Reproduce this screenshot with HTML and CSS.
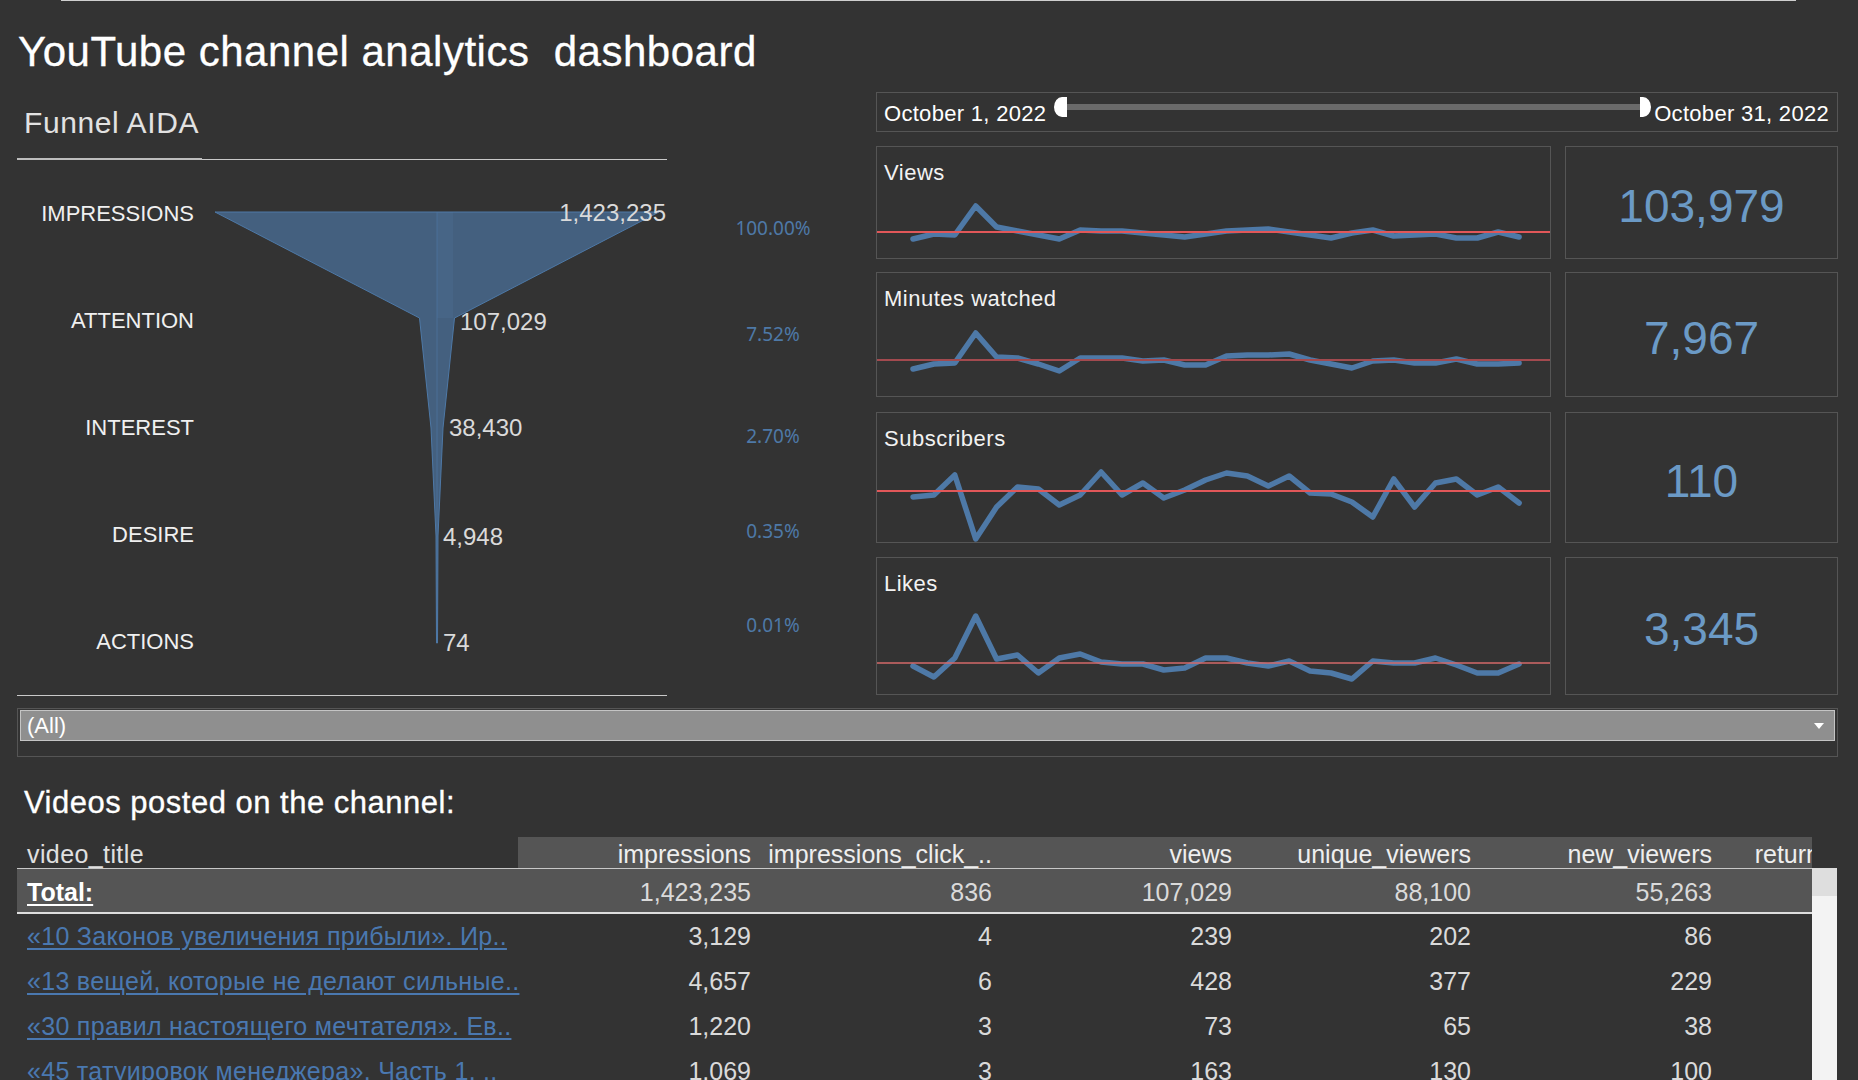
FILE: index.html
```html
<!DOCTYPE html>
<html lang="en">
<head>
<meta charset="utf-8">
<title>YouTube channel analytics dashboard</title>
<link rel="stylesheet" href="styles.css">
</head>
<body>
<div class="topline"></div>
<h1 class="title">YouTube channel analytics  dashboard</h1>

<div class="main">
  <section class="funnel-panel">
    <h2 class="funnel-title">Funnel AIDA</h2>
    <div class="rule"><span class="rule-a"></span><span class="rule-b"></span></div>
    <div class="funnel-body">
      <svg class="funnel-chart" width="465" height="535" viewBox="202 160 465 535">
        <polygon points="215,212 659,212 454.5,318 443,428 438,536 437.5,643 436.5,643 436,536 431,428 419.5,318" fill="#44607f" stroke="#4e79a7" stroke-width="1"/>
        <rect x="437" y="212" width="16" height="106" fill="#5b86b4" opacity="0.14"/>
        <line x1="437" y1="212" x2="437" y2="643" stroke="#4e79a7" stroke-width="1" opacity="0.6"/>
        <text class="fv" x="666" y="221" text-anchor="end">1,423,235</text>
        <text class="fv" x="460" y="330">107,029</text>
        <text class="fv" x="449" y="436">38,430</text>
        <text class="fv" x="443" y="545">4,948</text>
        <text class="fv" x="443" y="651">74</text>
      </svg>
      <div class="stage">IMPRESSIONS</div>
      <div class="stage">ATTENTION</div>
      <div class="stage">INTEREST</div>
      <div class="stage">DESIRE</div>
      <div class="stage">ACTIONS</div>
    </div>
  </section>

  <div class="pct-col">
    <div class="pct">100.00%</div>
    <div class="pct">7.52%</div>
    <div class="pct">2.70%</div>
    <div class="pct">0.35%</div>
    <div class="pct">0.01%</div>
  </div>

  <div class="right-col">
    <div class="date-box">
      <span class="date">October 1, 2022</span>
      <div class="slider">
        <div class="track"></div>
        <span class="handle handle-l"></span>
        <span class="handle handle-r"></span>
      </div>
      <span class="date">October 31, 2022</span>
    </div>

    <div class="metric-row r1">
      <div class="spark-card">
        <div class="spark-label">Views</div>
        <svg class="spark" width="673" height="72" viewBox="1 40 673 72">
          <polyline class="series" points="37,93 57.9,88 78.8,89 99.7,60 120.6,81 141.5,85 162.4,89 183.3,93 204.2,84 225.1,85 246,85 266.9,87 287.8,89 308.7,91 329.6,88 350.5,85 371.4,84 392.3,83 413.2,86 434.1,89 455,92 475.9,87 496.8,84 517.7,90 538.6,89 559.5,88 580.4,92 601.3,92 622.2,86 643.1,91"/>
          <line class="ref" x1="1" y1="86" x2="674" y2="86"/>
        </svg>
      </div>
      <div class="kpi">103,979</div>
    </div>

    <div class="metric-row r2">
      <div class="spark-card">
        <div class="spark-label">Minutes watched</div>
        <svg class="spark" width="673" height="84" viewBox="1 40 673 84">
          <polyline class="series" points="37,97 57.9,92 78.8,91 99.7,61 120.6,85 141.5,86 162.4,92 183.3,99 204.2,86 225.1,86 246,86 266.9,89 287.8,88 308.7,93 329.6,93 350.5,84 371.4,83 392.3,83 413.2,82 434.1,88 455,92 475.9,96 496.8,89 517.7,88 538.6,91 559.5,91 580.4,87 601.3,92 622.2,92 643.1,91"/>
          <line class="ref ref-dim" x1="1" y1="88" x2="674" y2="88"/>
        </svg>
      </div>
      <div class="kpi">7,967</div>
    </div>

    <div class="metric-row r3">
      <div class="spark-card">
        <div class="spark-label">Subscribers</div>
        <svg class="spark" width="673" height="90" viewBox="1 40 673 90">
          <polyline class="series" points="37,85 57.9,83 78.8,63 99.7,127 120.6,95 141.5,75 162.4,77 183.3,93 204.2,83 225.1,60 246,83 266.9,71 287.8,86 308.7,78 329.6,68 350.5,61 371.4,64 392.3,74 413.2,64 434.1,81 455,82 475.9,90 496.8,105 517.7,67 538.6,95 559.5,71 580.4,67 601.3,83 622.2,75 643.1,91"/>
          <line class="ref" x1="1" y1="79" x2="674" y2="79"/>
        </svg>
      </div>
      <div class="kpi">110</div>
    </div>

    <div class="metric-row r4">
      <div class="spark-card">
        <div class="spark-label">Likes</div>
        <svg class="spark" width="673" height="97" viewBox="1 40 673 97">
          <polyline class="series" points="37,109 57.9,120 78.8,101 99.7,59 120.6,102 141.5,98 162.4,116 183.3,101 204.2,97 225.1,105 246,107 266.9,107 287.8,113 308.7,111 329.6,101 350.5,101 371.4,106 392.3,109 413.2,104 434.1,114 455,116 475.9,122 496.8,104 517.7,106 538.6,106 559.5,101 580.4,108 601.3,116 622.2,116 643.1,107"/>
          <line class="ref ref-thin" x1="1" y1="106" x2="674" y2="106"/>
        </svg>
      </div>
      <div class="kpi">3,345</div>
    </div>
  </div>
</div>

<div class="filter">
  <div class="filter-bar"><span>(All)</span><span class="caret"></span></div>
</div>

<section class="videos">
  <h2 class="videos-title">Videos posted on the channel:</h2>
  <div class="table-wrap">
    <div class="table">
      <div class="row head">
        <div class="cell first">video_title</div>
        <div class="cell">impressions</div>
        <div class="cell">impressions_click_..</div>
        <div class="cell">views</div>
        <div class="cell">unique_viewers</div>
        <div class="cell">new_viewers</div>
        <div class="cell">returning_viewers</div>
      </div>
      <div class="row total">
        <div class="cell first"><span class="total-label">Total:</span></div>
        <div class="cell">1,423,235</div>
        <div class="cell">836</div>
        <div class="cell">107,029</div>
        <div class="cell">88,100</div>
        <div class="cell">55,263</div>
        <div class="cell"></div>
      </div>
      <div class="body">
        <div class="row data">
          <div class="cell first"><a class="link" href="#">«10 Законов увеличения прибыли». Ир..</a></div>
          <div class="cell">3,129</div>
          <div class="cell">4</div>
          <div class="cell">239</div>
          <div class="cell">202</div>
          <div class="cell">86</div>
          <div class="cell"></div>
        </div>
        <div class="row data">
          <div class="cell first"><a class="link" href="#">«13 вещей, которые не делают сильные..</a></div>
          <div class="cell">4,657</div>
          <div class="cell">6</div>
          <div class="cell">428</div>
          <div class="cell">377</div>
          <div class="cell">229</div>
          <div class="cell"></div>
        </div>
        <div class="row data">
          <div class="cell first"><a class="link" href="#">«30 правил настоящего мечтателя». Ев..</a></div>
          <div class="cell">1,220</div>
          <div class="cell">3</div>
          <div class="cell">73</div>
          <div class="cell">65</div>
          <div class="cell">38</div>
          <div class="cell"></div>
        </div>
        <div class="row data">
          <div class="cell first"><a class="link" href="#">«45 татуировок менеджера». Часть 1. ..</a></div>
          <div class="cell">1,069</div>
          <div class="cell">3</div>
          <div class="cell">163</div>
          <div class="cell">130</div>
          <div class="cell">100</div>
          <div class="cell"></div>
        </div>
      </div>
    </div>
    <div class="scrollbar"><div class="thumb"></div></div>
  </div>
</section>
</body>
</html>
```

FILE: styles.css
```css
* { box-sizing: border-box; }

html, body {
  margin: 0;
  padding: 0;
}

body {
  width: 1858px;
  height: 1080px;
  overflow: hidden;
  background: #333333;
  color: #eeeeee;
  font-family: "Liberation Sans", Arial, sans-serif;
}

.topline {
  height: 1px;
  width: 1735px;
  margin-left: 61px;
  background: #cfcfcf;
}

.title {
  margin: 0;
  height: 79px;
  padding: 26px 0 0 18px;
  font-size: 42px;
  line-height: 50px;
  font-weight: normal;
  letter-spacing: 0.5px;
  color: #ffffff;
  white-space: pre;
  -webkit-text-stroke: 0.3px #ffffff;
}

/* ---------- main area ---------- */
.main {
  display: flex;
  align-items: flex-start;
}

.funnel-panel {
  width: 650px;
  margin-left: 17px;
}

.funnel-title {
  margin: 25px 0 0;
  padding-left: 7px;
  font-size: 30px;
  line-height: 36px;
  font-weight: normal;
  letter-spacing: 0.6px;
  color: #e2e2e2;
}

.rule {
  display: flex;
  align-items: flex-end;
  height: 2px;
  margin-top: 17px;
}

.rule-a {
  width: 185px;
  height: 2px;
  background: #bdbdbd;
}

.rule-b {
  flex: 1;
  height: 1px;
  background: #c9c9c9;
}

.funnel-body {
  display: grid;
  grid-template-columns: 185px 465px;
  grid-template-rows: repeat(5, 107px);
  border-bottom: 1px solid #c9c9c9;
}

.funnel-chart {
  grid-column: 2;
  grid-row: 1 / 6;
  display: block;
}

.stage {
  grid-column: 1;
  display: flex;
  align-items: center;
  justify-content: flex-end;
  padding-right: 8px;
  font-size: 22px;
  color: #f0f0f0;
}

.fv {
  font-family: "Liberation Sans", Arial, sans-serif;
  font-size: 24px;
  fill: #dadada;
}

.pct-col {
  width: 209px;
  padding-left: 3px;
  display: flex;
  flex-direction: column;
  align-items: center;
}

.pct {
  font-family: "Noto Sans", "Open Sans", sans-serif;
  font-size: 19px;
  line-height: 24px;
  color: #4e79a7;
}

.pct:nth-child(1) { margin-top: 136px; }
.pct:nth-child(2) { margin-top: 82px; }
.pct:nth-child(3) { margin-top: 78px; }
.pct:nth-child(4) { margin-top: 71px; }
.pct:nth-child(5) { margin-top: 70px; }

/* ---------- right column ---------- */
.right-col {
  width: 962px;
}

.date-box {
  margin-top: 12px;
  height: 40px;
  border: 1px solid #555555;
  display: flex;
  align-items: center;
  padding: 0 8px 0 7px;
}

.date {
  font-size: 22px;
  line-height: 26px;
  padding-top: 4px;
  letter-spacing: 0.3px;
  color: #ffffff;
  white-space: nowrap;
}

.slider {
  position: relative;
  flex: 1;
  height: 20px;
  margin: 0 3px 10px 8px;
}

.track {
  height: 6px;
  margin: 7px 5px 0 6px;
  background: #6a6a6a;
}

.handle {
  position: absolute;
  top: 0;
  height: 20px;
  background: #ffffff;
}

.handle-l {
  left: 0;
  width: 13px;
  border-radius: 8px 0 0 8px / 10px 0 0 10px;
}

.handle-r {
  right: 0;
  width: 11px;
  border-radius: 0 8px 8px 0 / 0 10px 10px 0;
}

.metric-row {
  display: grid;
  grid-template-columns: 675px 273px;
  column-gap: 14px;
}

.r1 { margin-top: 14px; height: 113px; }
.r2 { margin-top: 13px; height: 125px; }
.r3 { margin-top: 15px; height: 131px; }
.r4 { margin-top: 14px; height: 138px; }

.spark-card {
  border: 1px solid #555555;
  display: flex;
  flex-direction: column;
}

.spark-label {
  margin: 13px 0 0 7px;
  font-size: 22px;
  line-height: 26px;
  letter-spacing: 0.5px;
  color: #f2f2f2;
}

.spark {
  display: block;
}

.series {
  fill: none;
  stroke: #4e79a7;
  stroke-width: 5.5;
  stroke-linejoin: round;
  stroke-linecap: round;
}

.ref {
  stroke: #e15759;
  stroke-width: 2;
}

.ref-dim {
  stroke: #a34a4f;
}

.ref-thin {
  stroke: #d46a6a;
  stroke-width: 1.5;
}

.kpi {
  border: 1px solid #555555;
  display: flex;
  align-items: center;
  justify-content: center;
  padding-top: 6px;
  font-size: 46px;
  color: #6b9ac6;
}

/* ---------- filter ---------- */
.filter {
  margin: 12px 0 0 17px;
  width: 1821px;
  height: 49px;
  border: 1px solid #555555;
  padding: 1px 2px 0;
}

.filter-bar {
  height: 31px;
  background: #8f8f8f;
  border: 1px solid #c4c4c4;
  display: flex;
  align-items: center;
  justify-content: space-between;
  padding: 0 10px 0 6px;
  font-size: 22px;
  color: #ffffff;
}

.caret {
  width: 0;
  height: 0;
  border-left: 5px solid transparent;
  border-right: 5px solid transparent;
  border-top: 6px solid #ffffff;
}

/* ---------- videos table ---------- */
.videos-title {
  margin: 28px 0 0 24px;
  font-size: 31px;
  line-height: 36px;
  font-weight: normal;
  letter-spacing: 0.5px;
  color: #ffffff;
  -webkit-text-stroke: 0.3px #ffffff;
}

.table-wrap {
  display: flex;
  margin: 16px 0 0 17px;
}

.table {
  width: 1795px;
  overflow: hidden;
}

.row {
  display: grid;
  grid-template-columns: 501px 242px 241px 240px 239px 241px 240px;
}

.cell {
  display: flex;
  align-items: center;
  justify-content: flex-end;
  padding-right: 9px;
  font-size: 25px;
  color: #dadada;
  white-space: nowrap;
  overflow: hidden;
}

.cell.first {
  justify-content: flex-start;
  padding: 0 0 0 10px;
  overflow: visible;
}

.head .cell {
  height: 32px;
  padding-top: 4px;
  background: #555555;
  border-bottom: 1px solid #c8c8c8;
  color: #eeeeee;
}

.head .cell.first {
  background: transparent;
  color: #e0e0e0;
  letter-spacing: 0.4px;
}

.total .cell {
  height: 45px;
  padding-top: 4px;
  background: #555555;
  border-bottom: 2px solid #dedede;
}

.total-label {
  font-weight: bold;
  color: #ffffff;
  text-decoration: underline;
  text-decoration-thickness: 2px;
  text-underline-offset: 3px;
}

.body {
  height: 166px;
  overflow: hidden;
}

.data .cell {
  height: 45px;
}

.link {
  color: #4a78b0;
  letter-spacing: 0.3px;
  text-decoration: underline;
  text-decoration-thickness: 2px;
  text-underline-offset: 3px;
}

.scrollbar {
  width: 25px;
  height: 212px;
  margin-top: 31px;
  background: #f3f3f3;
}

.thumb {
  height: 28px;
  background: #dedede;
}
```
